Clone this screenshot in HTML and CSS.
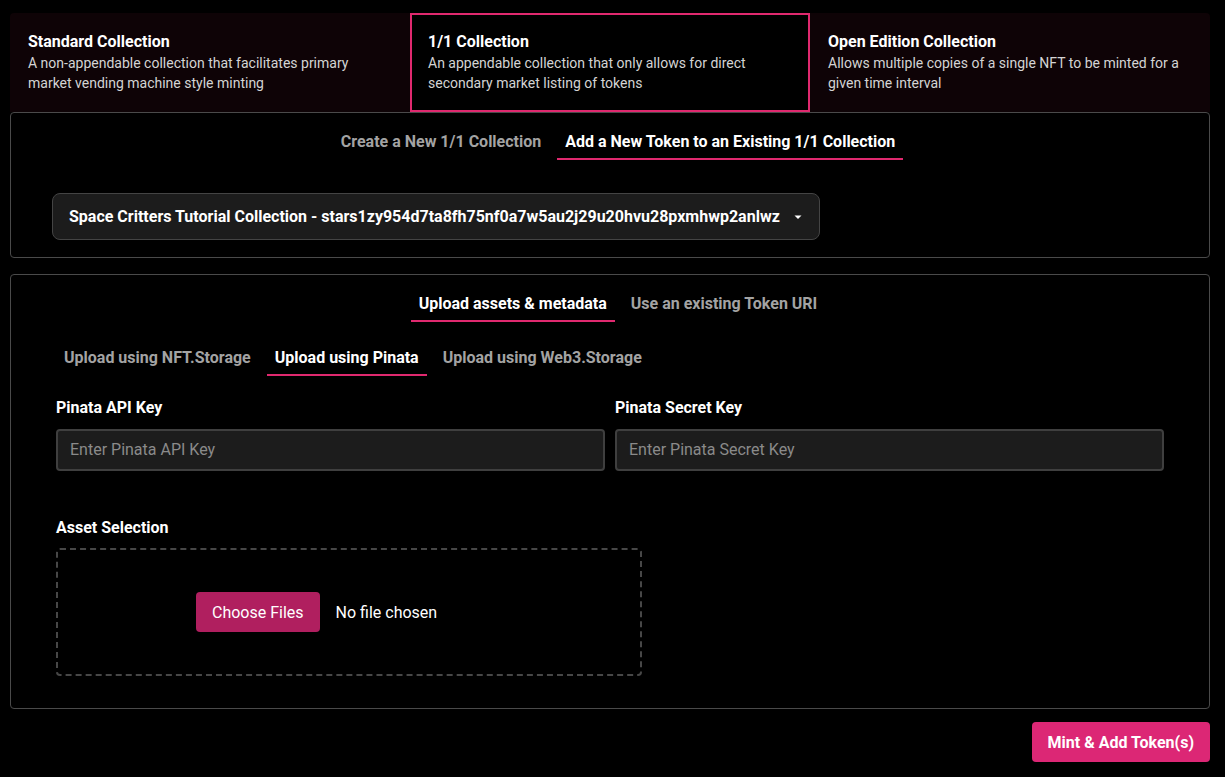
FILE: index.html
```html
<!DOCTYPE html>
<html>
<head>
<meta charset="utf-8">
<link rel="stylesheet" href="styles.css">
</head>
<body>
<div class="page">
  <div class="types">
    <div class="type">
      <div class="type-title">Standard Collection</div>
      <div class="type-desc">A non-appendable collection that facilitates primary market vending machine style minting</div>
    </div>
    <div class="type selected">
      <div class="type-title">1/1 Collection</div>
      <div class="type-desc">An appendable collection that only allows for direct secondary market listing of tokens</div>
    </div>
    <div class="type">
      <div class="type-title">Open Edition Collection</div>
      <div class="type-desc">Allows multiple copies of a single NFT to be minted for a given time interval</div>
    </div>
  </div>

  <div class="panel panel-top">
    <div class="tabs center">
      <div class="tab">Create a New 1/1 Collection</div>
      <div class="tab active">Add a New Token to an Existing 1/1 Collection</div>
    </div>
    <div class="select">
      <span>Space Critters Tutorial Collection - stars1zy954d7ta8fh75nf0a7w5au2j29u20hvu28pxmhwp2anlwz</span>
      <svg class="caret" width="10" height="6" viewBox="0 0 10 6"><path d="M1.5 1.5 L5 5 L8.5 1.5 Z" fill="#fff"/></svg>
    </div>
  </div>

  <div class="panel panel-upload">
    <div class="tabs center">
      <div class="tab active">Upload assets &amp; metadata</div>
      <div class="tab">Use an existing Token URI</div>
    </div>
    <div class="tabs sub">
      <div class="tab">Upload using NFT.Storage</div>
      <div class="tab active">Upload using Pinata</div>
      <div class="tab">Upload using Web3.Storage</div>
    </div>
    <div class="fields">
      <div class="field">
        <label class="label">Pinata API Key</label>
        <div class="input">Enter Pinata API Key</div>
      </div>
      <div class="field">
        <label class="label">Pinata Secret Key</label>
        <div class="input">Enter Pinata Secret Key</div>
      </div>
    </div>
    <div class="asset">
      <div class="label">Asset Selection</div>
      <div class="dropzone">
        <div class="choose">Choose Files</div>
        <div class="nofile">No file chosen</div>
      </div>
    </div>
  </div>

  <div class="actions">
    <button class="mint">Mint &amp; Add Token(s)</button>
  </div>
</div>
</body>
</html>
```

FILE: styles.css
```css
* { box-sizing: border-box; }
html, body { margin: 0; padding: 0; background: #000; }
body { font-family: Roboto, "Liberation Sans", sans-serif; color: #fff; }
.page { padding: 13px 15px 0 10px; }

.types {
  display: grid;
  grid-template-columns: 400px 400px 400px;
  background: #0e0306;
  border-radius: 4px 4px 0 0;
  height: 99px;
}
.type { padding: 20px 18px 0 18px; }
.type.selected { background: #000; border: 2px solid #e0296f; padding: 18px 16px 0 16px; }
.type-title { font-weight: 700; font-size: 16px; line-height: 18px; }
.type-desc { font-size: 14px; line-height: 20px; color: #d4d4d4; margin-top: 2px; }

.panel {
  border: 1px solid #4a4a4a;
  border-radius: 4px;
  width: 1200px;
}
.panel-top { height: 146px; padding-top: 17px; }
.panel-upload { margin-top: 16px; height: 435px; padding-top: 17px; }

.tabs { display: flex; gap: 8px; }
.tabs.center { justify-content: center; padding-left: 16px; }
.tab {
  font-weight: 700;
  font-size: 16px;
  color: #a3a3a3;
  padding: 2px 8px 6px;
  border-bottom: 2px solid transparent;
  line-height: 20px;
}
.tab.active { color: #fff; border-bottom-color: #e0296f; }

.select {
  margin: 33px 0 0 41px;
  width: 768px;
  height: 47px;
  background: #1c1c1c;
  border: 1px solid #444;
  border-radius: 8px;
  display: flex;
  align-items: center;
  padding: 0 16px;
  font-weight: 700;
  font-size: 16px;
  justify-content: space-between;
}

.tabs.sub { margin: 24px 0 0 45px; }

.fields {
  display: grid;
  grid-template-columns: 549px 549px;
  gap: 10px;
  margin: 22px 0 0 45px;
}
.label { display: block; font-weight: 700; font-size: 16px; line-height: 20px; margin-bottom: 11px; }
.input {
  height: 42px;
  background: #1c1c1c;
  border: 2px solid #3f3f3f;
  border-radius: 4px;
  color: #8a8a8a;
  font-size: 16px;
  padding: 0 12px 1px;
  display: flex;
  align-items: center;
}

.asset { margin: 47px 0 0 45px; }
.asset .label { margin-bottom: 10px; }
.dropzone {
  width: 586px;
  height: 128px;
  border: 2px dashed #474747;
  border-radius: 4px;
  display: flex;
  align-items: center;
  padding-left: 138px;
}
.choose {
  background: #b01f5f;
  color: #fff;
  font-size: 16px;
  border-radius: 4px;
  padding: 0 16px;
  height: 40px;
  display: flex;
  align-items: center;
}
.nofile { margin-left: 16px; font-size: 16px; }

.actions { display: flex; justify-content: flex-end; margin-top: 13px; width: 1200px; }
.mint {
  background: #dc2775;
  color: #fff;
  border: none;
  border-radius: 4px;
  font-family: Roboto, "Liberation Sans", sans-serif;
  font-weight: 700;
  font-size: 16px;
  height: 40px;
  padding: 0 16px;
}
```
